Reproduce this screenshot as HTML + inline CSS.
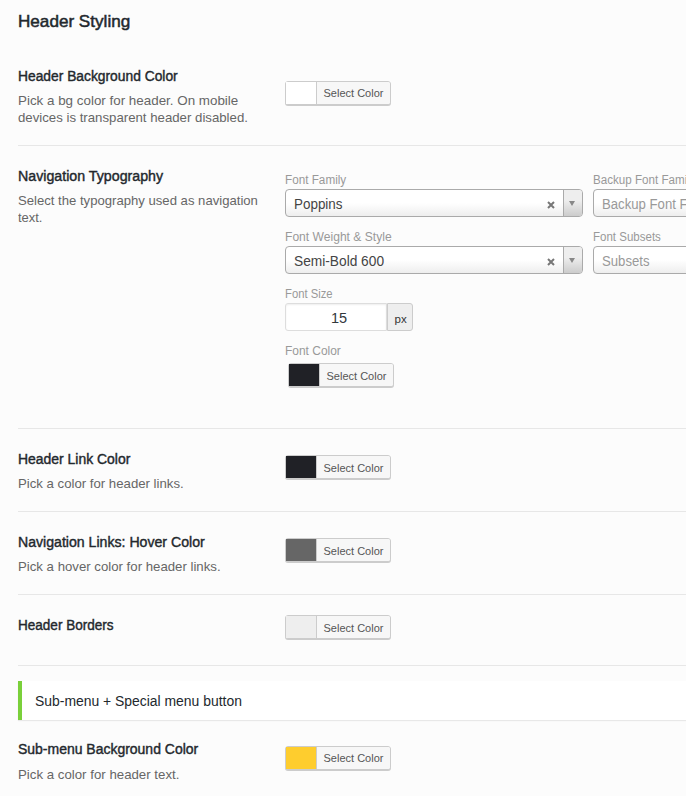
<!DOCTYPE html>
<html><head><meta charset="utf-8"><title>Header Styling</title>
<style>
html,body{margin:0;padding:0;}
body{width:686px;height:796px;overflow:hidden;position:relative;background:#fcfcfc;font-family:"Liberation Sans",sans-serif;}
.t{position:absolute;white-space:nowrap;line-height:20px;transform-origin:0 0;}
.sep{position:absolute;left:18px;right:0;height:1px;background:#e7e7e7;}
.cp{position:absolute;left:285px;width:104px;height:22px;border:1px solid #ccc;border-radius:3px;box-shadow:0 1px 0 #ccc;background:#f7f7f7;}
.cp .sw{position:absolute;left:0;top:0;width:30px;height:22px;}
.cp .lo{padding-top:1px;height:21px !important;}
.cp .lab{position:absolute;left:30px;top:0;right:0;height:22px;border-left:1px solid #ccc;background:#f7f7f7;border-radius:0 2px 2px 0;font-size:11px;line-height:22px;color:#555;text-align:center;}
.s2{position:absolute;height:26px;border:1px solid #aaa;border-radius:4px;background:linear-gradient(to top,#eee 0%,#fff 50%);overflow:hidden;}
.s2 .arr{position:absolute;right:0;top:0;width:18px;height:26px;border-left:1px solid #aaa;background:linear-gradient(to top,#ccc 0%,#eee 60%);}
.s2 .arr:after{content:"";position:absolute;left:5px;top:11px;border-left:3px solid transparent;border-right:3px solid transparent;border-top:5px solid #888;}
.x{position:absolute;left:261px;top:11px;}
</style></head><body>

<div class="cp" style="top:81px;"><div class="sw" style="background:#fff;"></div><div class="lab">Select Color</div></div>
<div class="sep" style="top:145px;"></div>

<div class="s2" style="left:285px;top:189px;width:296px;"><svg class="x" width="8" height="8" viewBox="0 0 8 8"><path d="M1 1L7 7M7 1L1 7" stroke="#777" stroke-width="2"/></svg><div class="arr"></div></div>
<div class="s2" style="left:593px;top:189px;width:296px;"></div>
<div class="s2" style="left:285px;top:246px;width:296px;"><svg class="x" width="8" height="8" viewBox="0 0 8 8"><path d="M1 1L7 7M7 1L1 7" stroke="#777" stroke-width="2"/></svg><div class="arr"></div></div>
<div class="s2" style="left:593px;top:246px;width:296px;"></div>

<div style="position:absolute;left:285px;top:303px;width:102px;height:28px;box-sizing:border-box;border:1px solid #ddd;border-radius:3px 0 0 3px;background:#fff;box-shadow:inset 0 1px 2px rgba(0,0,0,.07);"></div>
<div style="position:absolute;left:387px;top:303px;width:26px;height:28px;box-sizing:border-box;border:1px solid #ccc;border-radius:0 3px 3px 0;background:#eee;"></div>

<div class="cp" style="top:363px;left:288px;"><div class="sw" style="background:#202126;"></div><div class="lab lo">Select Color</div></div>
<div class="sep" style="top:428px;"></div>

<div class="cp" style="top:455px;"><div class="sw" style="background:#202126;"></div><div class="lab lo">Select Color</div></div>
<div class="sep" style="top:511px;"></div>

<div class="cp" style="top:538px;"><div class="sw" style="background:#666;"></div><div class="lab lo">Select Color</div></div>
<div class="sep" style="top:594px;"></div>

<div class="cp" style="top:615px;"><div class="sw" style="background:#eee;"></div><div class="lab lo">Select Color</div></div>
<div class="sep" style="top:665px;"></div>

<div style="position:absolute;left:18px;top:681px;right:0;height:39px;background:#fff;border-left:4px solid #7ad03a;box-shadow:0 1px 1px rgba(0,0,0,.08);"></div>

<div class="cp" style="top:746px;"><div class="sw" style="background:#fecd2e;"></div><div class="lab">Select Color</div></div>

<div id="title" class="t" style="left:18.38px;top:12.11px;font-size:17px;-webkit-text-stroke:0.5px #23282d;color:#23282d;transform:scaleX(1.0063);">Header Styling</div>
<div id="lbl1" class="t" style="left:18.38px;top:66.15px;font-size:14px;-webkit-text-stroke:0.4px #23282d;color:#23282d;transform:scaleX(0.9864);">Header Background Color</div>
<div id="d1a" class="t" style="left:18.38px;top:90.50px;font-size:13px;color:#666;transform:scaleX(1.0298);">Pick a bg color for header. On mobile</div>
<div id="d1b" class="t" style="left:18.38px;top:107.50px;font-size:13px;color:#666;transform:scaleX(1.0165);">devices is transparent header disabled.</div>
<div id="lbl2" class="t" style="left:18.38px;top:166.15px;font-size:14px;-webkit-text-stroke:0.4px #23282d;color:#23282d;transform:scaleX(1.0151);">Navigation Typography</div>
<div id="d2a" class="t" style="left:18.38px;top:190.50px;font-size:13px;color:#666;transform:scaleX(1.0089);">Select the typography used as navigation</div>
<div id="d2b" class="t" style="left:17.98px;top:207.50px;font-size:13px;color:#666;transform:scaleX(0.9958);">text.</div>
<div id="ff" class="t" style="left:285.00px;top:169.67px;font-size:12.5px;color:#999;transform:scaleX(0.9375);">Font Family</div>
<div id="bff" class="t" style="left:592.50px;top:169.67px;font-size:12.5px;color:#999;transform:scaleX(0.9300);">Backup Font Family</div>
<div id="fw" class="t" style="left:285.00px;top:226.67px;font-size:12.5px;color:#999;transform:scaleX(0.9672);">Font Weight &amp; Style</div>
<div id="fsub" class="t" style="left:592.50px;top:226.67px;font-size:12.5px;color:#999;transform:scaleX(0.9210);">Font Subsets</div>
<div id="fs" class="t" style="left:285.00px;top:283.67px;font-size:12.5px;color:#999;transform:scaleX(0.9020);">Font Size</div>
<div id="fc" class="t" style="left:285.00px;top:340.67px;font-size:12.5px;color:#999;transform:scaleX(0.9570);">Font Color</div>
<div id="pop" class="t" style="left:294.12px;top:194.15px;font-size:14px;color:#444;transform:scaleX(0.9592);">Poppins</div>
<div id="semi" class="t" style="left:294.44px;top:251.15px;font-size:14px;color:#444;transform:scaleX(0.9803);">Semi-Bold 600</div>
<div id="bffph" class="t" style="left:602.44px;top:194.15px;font-size:14px;color:#999;transform:scaleX(0.9400);">Backup Font Family</div>
<div id="subs" class="t" style="left:602.44px;top:251.15px;font-size:14px;color:#999;transform:scaleX(0.9388);">Subsets</div>
<div id="n15" class="t" style="left:331.00px;top:307.50px;font-size:14px;color:#32373c;transform:scaleX(1.0368);">15</div>
<div id="px" class="t" style="left:394.62px;top:308.84px;font-size:11.5px;color:#333;transform:scaleX(1.0000);">px</div>
<div id="lbl3" class="t" style="left:18.38px;top:449.15px;font-size:14px;-webkit-text-stroke:0.4px #23282d;color:#23282d;transform:scaleX(0.9954);">Header Link Color</div>
<div id="d3" class="t" style="left:18.38px;top:473.50px;font-size:13px;color:#666;transform:scaleX(1.0144);">Pick a color for header links.</div>
<div id="lbl4" class="t" style="left:18.38px;top:532.15px;font-size:14px;-webkit-text-stroke:0.4px #23282d;color:#23282d;transform:scaleX(1.0082);">Navigation Links: Hover Color</div>
<div id="d4" class="t" style="left:18.38px;top:556.50px;font-size:13px;color:#666;transform:scaleX(1.0158);">Pick a hover color for header links.</div>
<div id="lbl5" class="t" style="left:18.38px;top:615.15px;font-size:14px;-webkit-text-stroke:0.4px #23282d;color:#23282d;transform:scaleX(0.9671);">Header Borders</div>
<div id="sect" class="t" style="left:35.00px;top:691.15px;font-size:14px;color:#23282d;transform:scaleX(0.9937);">Sub-menu + Special menu button</div>
<div id="lbl6" class="t" style="left:18.38px;top:739.15px;font-size:14px;-webkit-text-stroke:0.4px #23282d;color:#23282d;transform:scaleX(0.9980);">Sub-menu Background Color</div>
<div id="d6" class="t" style="left:18.38px;top:764.50px;font-size:13px;color:#666;transform:scaleX(1.0200);">Pick a color for header text.</div>
</body></html>
